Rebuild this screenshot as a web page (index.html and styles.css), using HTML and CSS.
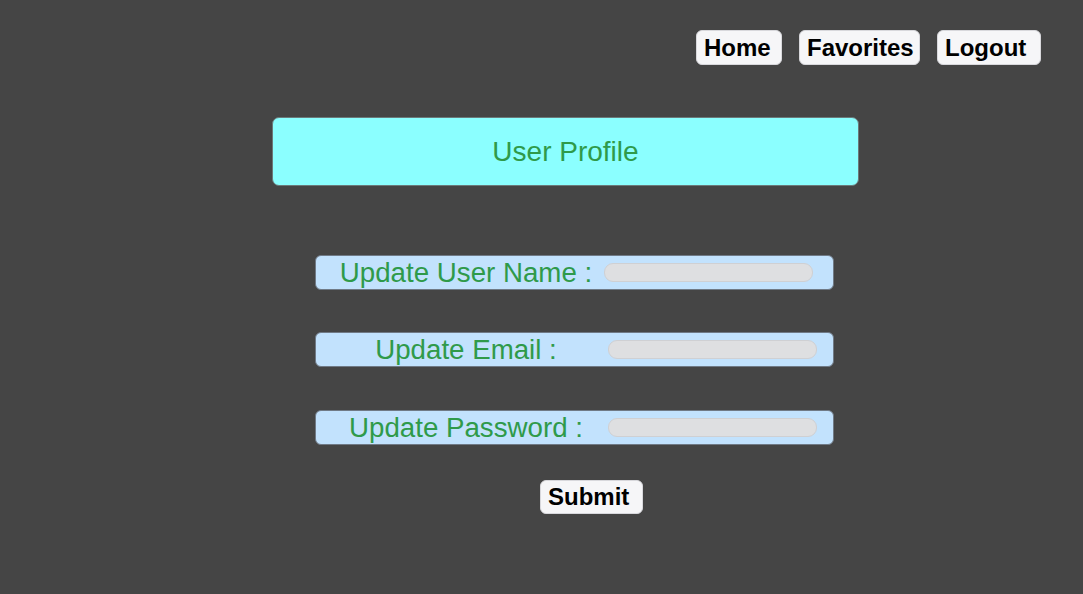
FILE: index.html
```html
<!DOCTYPE html>
<html lang="en">
<head>
 <meta charset="utf-8">
 <title>User Profile</title>
<link rel="stylesheet" href="styles.css">
</head>
<body>
<nav class="topnav">
	<button class="navbtn home">Home</button>
	<button class="navbtn fav">Favorites</button>
	<button class="navbtn logout">Logout</button>
</nav>

<main class="profile">
	<div class="title">User Profile</div>

	<form class="updates" onsubmit="return false;">
		<div class="row"><label class="lbl">Update User Name :</label><input class="field first" type="text"></div>
		<div class="row"><label class="lbl">Update Email :</label><input class="field" type="email"></div>
		<div class="row"><label class="lbl">Update Password :</label><input class="field" type="password"></div>
		<button class="navbtn submit" type="submit">Submit</button>
	</form>
</main>
</body>
</html>
```

FILE: styles.css
```css
body { margin:0; background:#454545; font-family:"Liberation Sans", Arial, sans-serif; }

.topnav { display:flex; justify-content:flex-end; gap:17px; padding:30px 42px 0 0; }
.navbtn { box-sizing:border-box; height:35px; padding:0 0 0 7px; text-align:left; background:#f6f6f8; border:1px solid #d8d8dc; border-radius:6px; font-family:"Liberation Sans", Arial, sans-serif; font-size:24px; font-weight:bold; color:#000; cursor:pointer; }
.home { width:86px; }
.fav { width:121px; }
.logout { width:104px; }

.profile { display:flex; flex-direction:column; align-items:flex-start; padding-left:272px; margin-top:52px; }
.title { box-sizing:border-box; width:587px; height:69px; display:flex; align-items:center; justify-content:center; background:#8bffff; border:1px solid #6a7a7a; border-radius:7px; color:#2f9a4a; font-size:28px; }

.updates { display:flex; flex-direction:column; align-items:flex-start; margin:69px 0 0 43px; }
.row { box-sizing:border-box; width:519px; height:35px; display:flex; align-items:center; padding-left:9px; margin-bottom:42px; background:#c2e2fd; border:1px solid #707a86; border-radius:6px; }
.row:nth-child(2) { margin-bottom:43px; }
.row:nth-child(3) { margin-bottom:35px; }
.lbl { width:282px; flex:none; text-align:center; color:#2f9a4a; font-size:27.7px; line-height:30px; white-space:nowrap; }
.field { box-sizing:border-box; width:209px; height:19px; margin:0 0 0 1px; padding:0 8px; background:#dedfe1; border:1px solid #cfd0d3; border-radius:9px; outline:none; }
.field.first { margin-left:-3px; }

.submit { width:103px; height:34px; margin-left:225px; }
```
